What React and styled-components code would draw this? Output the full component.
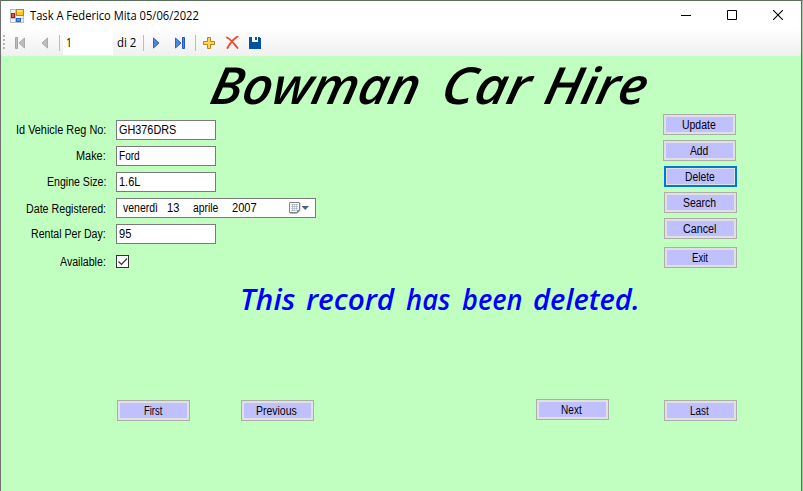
import React, { useLayoutEffect, useRef, useState } from 'react';
import styled, { createGlobalStyle } from 'styled-components';

const Global = createGlobalStyle`
  * { box-sizing: border-box; }
  html, body { margin: 0; padding: 0; overflow: hidden; background: #c0ffc0; }
  button, input { font: inherit; color: inherit; }
`;

const Window = styled.div`
  width: 803px;
  height: 491px;
  display: flex;
  flex-direction: column;
  background: #c0ffc0;
  border-top: 1px solid #5c6f5c;
  border-left: 1px solid #707070;
  border-right: 1px solid #9fd09f;
  box-shadow: inset -1px 0 #58705a;
  font-family: 'Liberation Sans', Arial, sans-serif;
  font-size: 12px;
  line-height: 14px;
  color: #000;
`;

const TitleBar = styled.header`
  flex: none;
  width: 800px;
  height: 30px;
  display: flex;
  align-items: center;
  background: #fff;
  padding-left: 9px;
  font-family: 'Open Sans', sans-serif;
`;
const Caption = styled.div`
  flex: 1;
  padding-left: 6px;
`;
const Controls = styled.div`
  display: flex;
  height: 28px;
  margin-bottom: 2px;
`;
const ControlButton = styled.button`
  width: 46px;
  padding: 0;
  border: 0;
  background: none;
  display: grid;
  place-items: center;
`;

const ToolBar = styled.nav`
  flex: none;
  width: 800px;
  height: 25px;
  display: flex;
  align-items: center;
  background: linear-gradient(#fdfdfd, #f0f0f0);
  border-radius: 0 0 3px 3px;
  font-family: 'Open Sans', sans-serif;
`;
const Tool = styled.span`
  display: flex;
  justify-content: center;
  width: ${p => p.$w || 23}px;
  padding: 0 1px 2px 0;
`;
const Divider = styled.span`
  width: 1px;
  height: 16px;
  margin-bottom: 1px;
  background: #bdbdbd;
`;
const Position = styled.div`
  width: 50px;
  height: 23px;
  margin-left: 3px;
  padding: 4px 3px;
  background: #fff;
`;
const Count = styled.div`
  width: 30px;
  padding: 0 0 2px 4px;
`;

const Body = styled.main`
  flex: 1;
  min-height: 0;
  width: 800px;
`;
const FitBox = styled.span`
  display: inline-block;
  width: ${p => p.$w}px;
  white-space: nowrap;
  vertical-align: top;
  text-align: left;
`;
const FitInner = styled.span`
  display: inline-block;
  transform-origin: 0 0;
`;

/* Condenses or widens a run of text to an exact width. */
function Fit({ w, children }) {
  const ref = useRef(null);
  const [scale, setScale] = useState(1);
  useLayoutEffect(() => {
    setScale(w / ref.current.offsetWidth);
  }, [w]);
  return (
    <FitBox $w={w}>
      <FitInner ref={ref} style={{ transform: `scaleX(${scale})` }}>{children}</FitInner>
    </FitBox>
  );
}

const Heading = styled.h1`
  margin: 0;
  height: 58px;
  display: flex;
  padding-left: 211px;
  font: italic 600 51px/56px 'Open Sans', sans-serif;
  transform: skewX(-12deg);
`;
const Word = styled.span`
  margin-right: ${p => p.$gap || 0}px;
`;
const Middle = styled.div`
  height: 166px;
  display: flex;
  justify-content: space-between;
  padding-right: 64px;
`;
const Fields = styled.form`
  display: flex;
  flex-direction: column;
  padding-top: 6px;
`;
const Row = styled.label`
  display: flex;
  height: 20px;
  margin-bottom: 6px;
  margin-top: ${p => p.$top || 0}px;
`;
const Label = styled.span`
  width: 105px;
  margin-right: 10px;
  text-align: right;
  padding-top: ${p => p.$drop || 3}px;
`;
const Field = styled.span`
  width: ${p => p.$w || 100}px;
  height: 20px;
  display: flex;
  align-items: flex-start;
  background: #fff;
  border: 1px solid #7a7a7a;
  padding: 2px 2px 0;
`;
const DateField = styled(Field)`
  padding-left: 6px;
`;
const DatePart = styled.span`
  width: ${p => p.$w}px;
`;
const Check = styled.span`
  width: 13px;
  height: 13px;
  margin-top: 3px;
  display: grid;
  place-items: center;
  background: #fff;
  border: 1px solid #333;
`;
const Actions = styled.div`
  display: flex;
  flex-direction: column;
  width: 74px;
`;
const PushButton = styled.button`
  flex: none;
  width: 73px;
  height: 21px;
  padding: 0 2px 0 0;
  margin: ${p => p.$margin || '0 0 5px 1px'};
  text-align: center;
  line-height: 14px;
  background: #c0c0ff;
  border: ${p => (p.$focus ? '2px solid #0078d7' : '1px solid #adadad')};
  box-shadow: inset 0 0 0 ${p => (p.$focus ? 1 : 2)}px #e1e1e1;
`;
const Message = styled.p`
  margin: 0;
  height: 119px;
  padding: 0 0 0 239px;
  display: flex;
  color: #0000ff;
  font: italic 600 28px/39px 'Open Sans', sans-serif;
`;
const Navigation = styled.footer`
  display: flex;
  align-items: flex-start;
  padding-left: 116px;
`;

const FormIcon = () => (
  <svg width="14" height="14" viewBox="0 0 14 14" shapeRendering="crispEdges">
    <path d="M.5.5h13v13H.5z" fill="#f2f2f2" stroke="#b8bec4" />
    <path d="M5 0v14M0 9h14" stroke="#b8bec4" />
    <path d="M6.5.5h7v6h-7z" fill="#fbc52a" stroke="#b98716" />
    <path d="M7 1h5v2H7z" fill="#ffe780" />
    <path d="M1.5 4.5h3v4h-3z" fill="#df5639" stroke="#a71e12" />
    <path d="M6.5 9.5h4v3h-4z" fill="#5298ed" stroke="#2564c2" />
  </svg>
);
const Grip = () => (
  <svg width="3" height="15" fill="#b5b5b5" shapeRendering="crispEdges">
    <path d="M0 0h2v2H0zM0 4h2v2H0zM0 8h2v2H0zM0 12h2v2H0z" />
  </svg>
);
const Arrow = ({ kind }) => {
  const grey = kind === 'first' || kind === 'prev';
  const bar = kind === 'first' || kind === 'last';
  const edge = grey ? '#a5a5a5' : '#2456c5';
  const fill = grey ? '#bdbdbd' : '#4b86ee';
  return (
    <svg width="12" height="12" viewBox="0 0 12 12">
      <g transform={grey ? 'translate(12 0) scale(-1 1)' : undefined}>
        <path d={bar ? 'M1.5 1v10l5.5-5z' : 'M3.5 1v10l5.5-5z'} fill={fill} stroke={edge} strokeWidth=".9" />
        {bar && <path d="M8.5.5h2v11h-2z" fill={fill} stroke={edge} />}
      </g>
    </svg>
  );
};
const Plus = () => (
  <svg width="12" height="12" viewBox="0 0 12 12">
    <path d="M4.5.5h3v4h4v3h-4v4h-3v-4h-4v-3h4z" fill="#ffd45c" stroke="#b88617" />
  </svg>
);
const Cross = () => (
  <svg width="13" height="13" viewBox="0 0 13 13" fill="none">
    <path d="M1 1.5c4 2 7 6 10.5 10.5M11.5.5C8 3 4 7 1.5 12" stroke="#f0482c" strokeWidth="1.9" strokeLinecap="round" />
  </svg>
);
const Disk = () => (
  <svg width="12" height="12" viewBox="0 0 12 12" shapeRendering="crispEdges">
    <path d="M0 0h3v5h6V0h1l2 2v10H0z" fill="#00539c" />
    <path d="M6 0h2v3H6z" fill="#00539c" />
  </svg>
);
const CalendarIcon = () => (
  <svg width="22" height="14" viewBox="0 0 22 14">
    <path d="M2 12.5h7l3-3V2" fill="none" stroke="#b9b5b5" />
    <path d="M1.5 1.5h10v8l-2 2h-8z" fill="#fff" stroke="#8a8487" />
    <path d="M3 3.5h7M3 5.5h7M3 7.5h7M3 9.5h5M4.5 3v7M6.5 3v7M8.5 3v7" stroke="#a3b3cb" strokeWidth=".7" />
    <path d="M9.5 11.5v-2h2" fill="none" stroke="#8a8487" />
    <path d="M13.5 5h7.5l-3.75 4z" fill="#4a6082" />
  </svg>
);

const ACTIONS = [
  ['Update', 34, '0 0 5px 0'],
  ['Add', 18, '0 0 5px 0'],
  ['Delete', 30],
  ['Search', 33],
  ['Cancel', 33, '0 0 8px 1px'],
  ['Exit', 16],
];
const PAGES = [
  ['First', 18, '1px 51px 0 0'],
  ['Previous', 41, '1px 222px 0 0'],
  ['Next', 21, '0 55px 0 0'],
  ['Last', 19, '1px 0 0 0'],
];

export default function App() {
  return (
    <>
      <Global />
      <Window>
        <TitleBar>
          <FormIcon />
          <Caption><Fit w={169}>Task A Federico Mita 05/06/2022</Fit></Caption>
          <Controls>
            <ControlButton aria-label="Minimize">
              <svg width="12" height="10"><path d="M1 5.5h10" stroke="#000" /></svg>
            </ControlButton>
            <ControlButton aria-label="Maximize">
              <svg width="10" height="10"><path d="M.5.5h9v9h-9z" fill="none" stroke="#000" /></svg>
            </ControlButton>
            <ControlButton aria-label="Close">
              <svg width="10" height="10"><path d="M0 0l10 10M10 0L0 10" stroke="#000" strokeWidth="1.1" /></svg>
            </ControlButton>
          </Controls>
        </TitleBar>
        <ToolBar>
          <Tool $w={8}><Grip /></Tool>
          <Tool><Arrow kind="first" /></Tool>
          <Tool $w={27}><Arrow kind="prev" /></Tool>
          <Divider />
          <Position><Fit w={6}>1</Fit></Position>
          <Count><Fit w={19}>di 2</Fit></Count>
          <Divider />
          <Tool $w={25}><Arrow kind="next" /></Tool>
          <Tool><Arrow kind="last" /></Tool>
          <Tool $w={3} />
          <Divider />
          <Tool $w={26}><Plus /></Tool>
          <Tool $w={21}><Cross /></Tool>
          <Tool $w={25}><Disk /></Tool>
        </ToolBar>
        <Body>
          <Heading>
            <Word $gap={22}><Fit w={209}>Bowman</Fit></Word>
            <Word $gap={15}><Fit w={88}>Car</Fit></Word>
            <Word><Fit w={102}>Hire</Fit></Word>
          </Heading>
          <Middle>
            <Fields>
              <Row>
                <Label><Fit w={90}>Id Vehicle Reg No:</Fit></Label>
                <Field><Fit w={57}>GH376DRS</Fit></Field>
              </Row>
              <Row>
                <Label><Fit w={30}>Make:</Fit></Label>
                <Field><Fit w={21}>Ford</Fit></Field>
              </Row>
              <Row>
                <Label><Fit w={59}>Engine Size:</Fit></Label>
                <Field><Fit w={21}>1.6L</Fit></Field>
              </Row>
              <Row>
                <Label $drop={4}><Fit w={80}>Date Registered:</Fit></Label>
                <DateField $w={200}>
                  <DatePart $w={44}><Fit w={35}>venerdì</Fit></DatePart>
                  <DatePart $w={26}><Fit w={12}>13</Fit></DatePart>
                  <DatePart $w={39}><Fit w={25}>aprile</Fit></DatePart>
                  <DatePart $w={56}><Fit w={25}>2007</Fit></DatePart>
                  <CalendarIcon />
                </DateField>
              </Row>
              <Row>
                <Label><Fit w={75}>Rental Per Day:</Fit></Label>
                <Field><Fit w={12}>95</Fit></Field>
              </Row>
              <Row $top={2}>
                <Label $drop={3}><Fit w={46}>Available:</Fit></Label>
                <Check>
                  <svg width="11" height="11"><path d="M1.5 5.5l3 3 5.5-6" fill="none" stroke="#333" strokeWidth="1.2" /></svg>
                </Check>
              </Row>
            </Fields>
            <Actions>
              {ACTIONS.map(([text, w, margin]) => (
                <PushButton key={text} $margin={margin} $focus={text === 'Delete'}>
                  <Fit w={w}>{text}</Fit>
                </PushButton>
              ))}
            </Actions>
          </Middle>
          <Message>
            <Word $gap={11}><Fit w={55}>This</Fit></Word>
            <Word $gap={12}><Fit w={88}>record</Fit></Word>
            <Word $gap={12}><Fit w={44}>has</Fit></Word>
            <Word $gap={10}><Fit w={61}>been</Fit></Word>
            <Word><Fit w={107}>deleted.</Fit></Word>
          </Message>
          <Navigation>
            {PAGES.map(([text, w, margin]) => (
              <PushButton key={text} $margin={margin}>
                <Fit w={w}>{text}</Fit>
              </PushButton>
            ))}
          </Navigation>
        </Body>
      </Window>
    </>
  );
}
